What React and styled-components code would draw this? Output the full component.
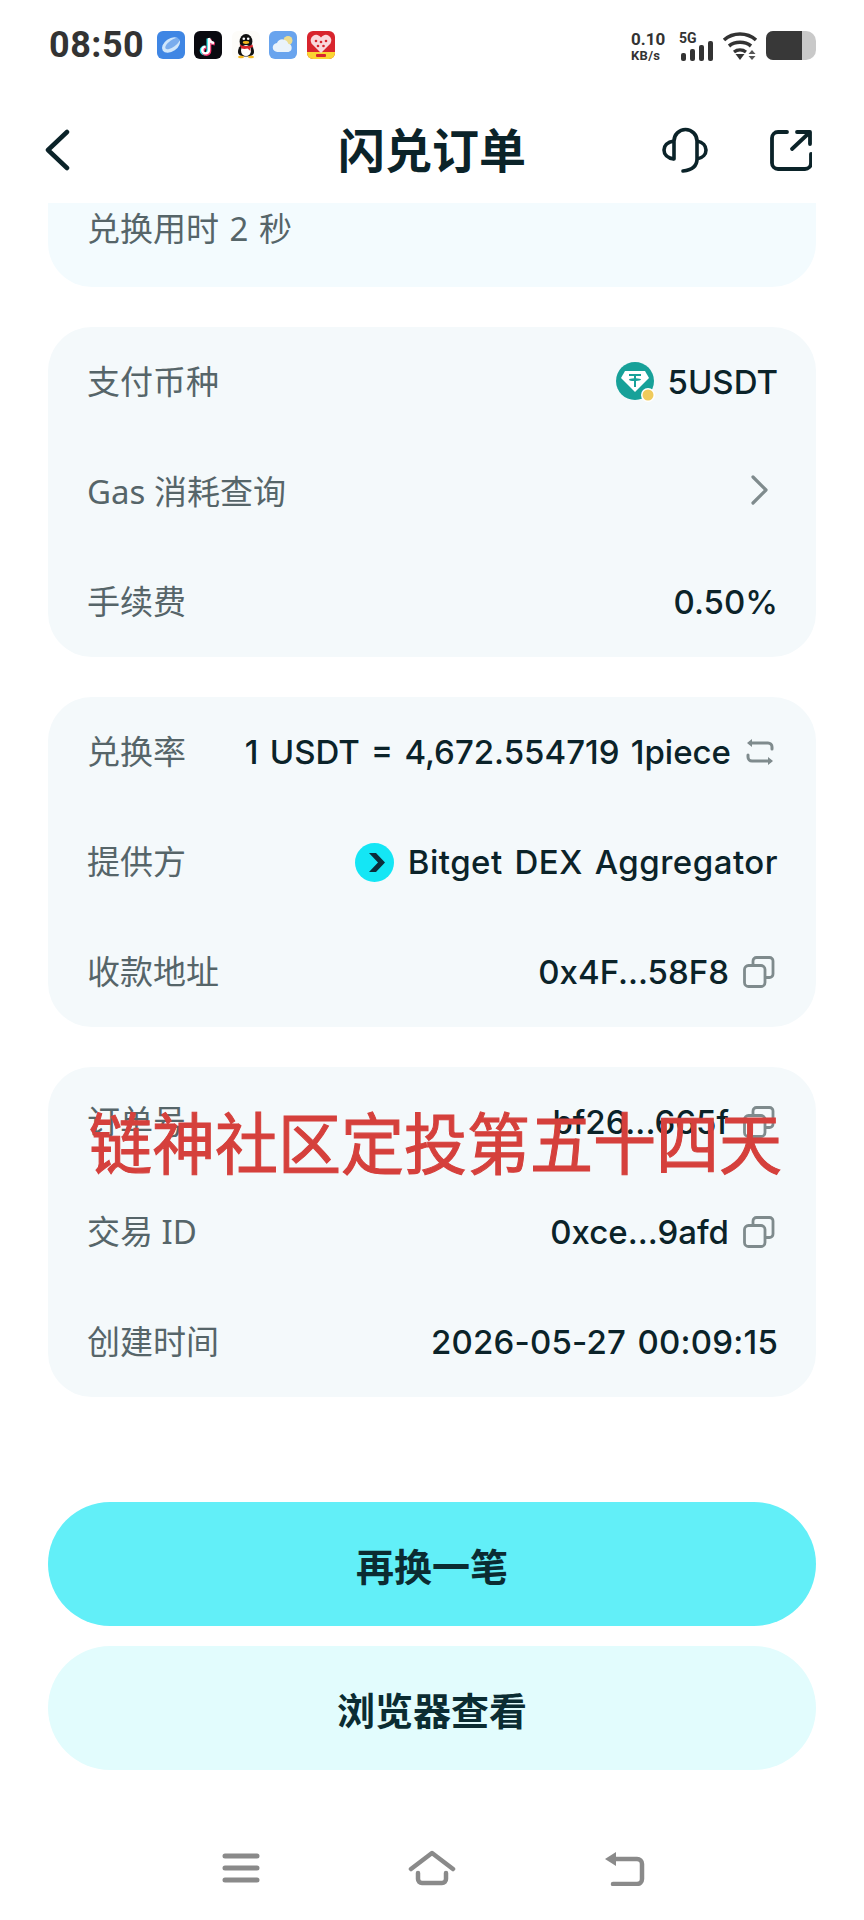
import React from 'react';
import styled, { createGlobalStyle } from 'styled-components';

const GlobalStyle = createGlobalStyle`
  html, body {
    margin: 0;
    padding: 0;
    background: #fff;
  }
  * {
    box-sizing: border-box;
  }
`;

const FONT = '"Noto Sans", "Noto Sans CJK SC", sans-serif';
const INK = '#0b2329';
const MUTED = '#566569';
const ICON_GRAY = '#7f8b8d';

const Page = styled.div`
  position: relative;
  width: 864px;
  height: 1920px;
  overflow: hidden;
  display: flex;
  flex-direction: column;
  background: #fff;
  font-family: ${FONT};
  color: ${INK};
`;

const StatusBar = styled.div`
  height: 90px;
  padding: 31px 48px 0 49px;
  display: flex;
  justify-content: space-between;
  align-items: flex-start;
  color: #333;
`;

const StatusLeft = styled.div`
  display: flex;
  align-items: center;
  gap: 9.5px;
`;

const Clock = styled.span`
  font-family: "Roboto", sans-serif;
  font-size: 36px;
  line-height: 28px;
  font-weight: 700;
  letter-spacing: 0.5px;
  margin-right: 3px;
`;

const StatusRight = styled.div`
  display: flex;
  align-items: flex-start;
`;

const Speed = styled.div`
  width: 48px;
  font-family: "Roboto", sans-serif;
  font-weight: 700;
  text-align: left;
  line-height: 1;
`;

const SpeedValue = styled.div`
  font-size: 17px;
  height: 18px;
`;

const SpeedUnit = styled.div`
  font-size: 13px;
  letter-spacing: 0.3px;
`;

const NetworkBox = styled.div`
  position: relative;
  width: 43px;
  height: 30px;
`;

const NetworkLabel = styled.span`
  position: absolute;
  left: 0;
  top: 0;
  font-family: "Roboto", sans-serif;
  font-size: 14px;
  line-height: 14px;
  font-weight: 700;
`;

const Battery = styled.div`
  width: 50px;
  height: 29px;
  margin-left: 8px;
  border-radius: 7px 10px 10px 7px;
  overflow: hidden;
  background: #c9c9c9;
`;

const BatteryFill = styled.div`
  height: 100%;
  background: #383838;
`;

const Header = styled.div`
  height: 113px;
  padding: 6px 52px 0;
  display: grid;
  grid-template-columns: 1fr auto 1fr;
  align-items: center;
  flex-shrink: 0;
`;

const BackButton = styled.div`
  display: flex;
  margin-left: -8px;
`;

const Title = styled.h1`
  margin: 0;
  font-size: 47px;
  line-height: 60px;
  font-weight: 700;
`;

const HeaderActions = styled.div`
  display: flex;
  align-items: center;
  justify-content: flex-end;
  gap: 62px;
`;

const Content = styled.div`
  padding: 0 48px;
  display: flex;
  flex-direction: column;
  gap: 40px;
`;

const DurationCard = styled.div`
  height: 84px;
  padding: 0 39px 36px;
  display: flex;
  align-items: center;
  background: #f3fbfe;
  border-radius: 0 0 44px 44px;
  font-size: 33px;
  word-spacing: 2px;
  color: ${MUTED};
`;

const Card = styled.div`
  background: #f4f9fb;
  border-radius: 44px;
  padding: 0 38px 0 39px;
`;

const Row = styled.div`
  height: 110px;
  padding-bottom: 4px;
  display: flex;
  align-items: center;
  justify-content: space-between;
`;

const Label = styled.span`
  font-size: 33px;
  color: ${MUTED};
  white-space: nowrap;
`;

const Value = styled.span`
  display: flex;
  align-items: center;
  gap: ${({ $gap }) => $gap || 14}px;
  padding-top: 4px;
  font-family: "Inter", "Noto Sans CJK SC", sans-serif;
  font-size: 33px;
  font-weight: 500;
  letter-spacing: ${({ $spacing }) => $spacing || 0}px;
  word-spacing: 2.5px;
  white-space: nowrap;
`;

const TrailingIcon = styled.span`
  display: flex;
  margin-right: ${({ $offset }) => $offset || 3}px;
`;

const Actions = styled.div`
  margin-top: 105px;
  padding: 0 48px;
  display: flex;
  flex-direction: column;
  gap: 20px;
`;

const Button = styled.div`
  height: 124px;
  border-radius: 62px;
  display: flex;
  align-items: center;
  justify-content: center;
  font-size: 38px;
  font-weight: 700;
  color: #0b2c32;
  background: ${({ $primary }) => ($primary ? '#62eff8' : '#e2fcfd')};
`;

const NavBar = styled.div`
  margin-top: 80px;
  padding: 0 219px 0 222px;
  display: flex;
  align-items: center;
  justify-content: space-between;
`;

const Watermark = styled.div`
  position: absolute;
  left: 89px;
  top: 1102px;
  font-family: "Noto Sans CJK SC", sans-serif;
  font-size: 63px;
  line-height: 76px;
  color: #d5403c;
  -webkit-text-stroke: 1px #d5403c;
  white-space: nowrap;
  transform: scaleY(1.06);
`;

const AppIcon = ({ children }) => (
  <svg width="28" height="28" viewBox="0 0 28 28">{children}</svg>
);

const BrowserIcon = () => (
  <AppIcon>
    <rect width="28" height="28" rx="6" fill="#3f86e4" />
    <ellipse cx="14" cy="14" rx="10" ry="6.5" fill="#cfe6fb" transform="rotate(-35 14 14)" />
    <ellipse cx="15.5" cy="12.5" rx="8.5" ry="3.5" fill="#3f86e4" transform="rotate(-35 15.5 12.5)" opacity="0.6" />
  </AppIcon>
);

const TikTokIcon = () => (
  <AppIcon>
    <rect width="28" height="28" rx="6" fill="#0a0a10" />
    <path d="M15 7v12a3.4 3.4 0 1 1-3.4-3.4M15 7c.4 3 2.4 4.6 5 5" fill="none" stroke="#25e2e6" strokeWidth="3" transform="translate(-1 .5)" />
    <path d="M15 7v12a3.4 3.4 0 1 1-3.4-3.4M15 7c.4 3 2.4 4.6 5 5" fill="none" stroke="#f2356b" strokeWidth="3" transform="translate(.8 1)" />
    <path d="M15 7v12a3.4 3.4 0 1 1-3.4-3.4M15 7c.4 3 2.4 4.6 5 5" fill="none" stroke="#fff" strokeWidth="2.4" />
  </AppIcon>
);

const QQIcon = () => (
  <AppIcon>
    <rect width="28" height="28" rx="6" fill="#fdfcf9" />
    <ellipse cx="14" cy="10.5" rx="6.4" ry="7.5" fill="#111" />
    <path d="M6 21c0-5 3-8 8-8s8 3 8 8c0 3-3 4.5-8 4.5S6 24 6 21z" fill="#111" />
    <ellipse cx="14" cy="19.5" rx="5" ry="5.5" fill="#fff" />
    <path d="M7.5 13.5c4 2 9 2 13 0l.5 2.5-3 1 .5 3-3-2.5c-2 .5-4 .5-6 0z" fill="#d8262b" />
    <ellipse cx="14" cy="11.5" rx="3.2" ry="1.4" fill="#f5b81f" />
    <circle cx="11.8" cy="7.8" r="1.3" fill="#fff" />
    <circle cx="16.2" cy="7.8" r="1.3" fill="#fff" />
    <ellipse cx="9" cy="26" rx="3" ry="1.2" fill="#f5b81f" />
    <ellipse cx="19" cy="26" rx="3" ry="1.2" fill="#f5b81f" />
  </AppIcon>
);

const WeatherIcon = () => (
  <AppIcon>
    <rect width="28" height="28" rx="6" fill="#69a4ee" />
    <circle cx="19" cy="9.5" r="4.5" fill="#ecdc8f" />
    <path d="M8.5 21a4.5 4.5 0 0 1-.5-9 6 6 0 0 1 11.3.8A4.2 4.2 0 0 1 19.5 21z" fill="#eaf3fb" />
  </AppIcon>
);

const ShopIcon = () => (
  <AppIcon>
    <rect width="28" height="28" rx="6" fill="#d8242d" />
    <path d="M0 21h28v1a6 6 0 0 1-6 6H6a6 6 0 0 1-6-6z" fill="#fbd532" />
    <path d="M14 22 4.5 12.5A5.3 5.3 0 0 1 14 6.5a5.3 5.3 0 0 1 9.5 6z" fill="#f9d8dc" />
    <g fill="#d8242d">
      <circle cx="9" cy="10" r="1.3" />
      <circle cx="14" cy="11" r="1.3" />
      <circle cx="19" cy="10" r="1.3" />
      <circle cx="11" cy="15" r="1.3" />
      <circle cx="16.5" cy="15" r="1.3" />
    </g>
    <rect x="9" y="23" width="10" height="3" rx="1" fill="#d8242d" />
  </AppIcon>
);

const SignalIcon = () => (
  <svg width="32" height="20" viewBox="0 0 32 20" style={{ position: 'absolute', left: 2, top: 10 }}>
    <rect x="0" y="12" width="5" height="8" rx="2" fill="#333" />
    <rect x="9" y="8" width="5" height="12" rx="2" fill="#333" />
    <rect x="18" y="4" width="5" height="16" rx="2" fill="#333" />
    <rect x="27" y="0" width="5" height="20" rx="2" fill="#333" />
  </svg>
);

const WifiIcon = () => (
  <svg width="36" height="30" viewBox="0 0 36 30">
    <path d="M2 9c9-8 23-8 32 0" fill="none" stroke="#333" strokeWidth="3.6" />
    <path d="M7 15c6-5 16-5 22 0" fill="none" stroke="#333" strokeWidth="3.6" />
    <path d="M12 21c3.5-2.6 8.5-2.6 12 0" fill="none" stroke="#333" strokeWidth="3.4" />
    <path d="M13.5 23h9l-4.5 6z" fill="#333" />
    <path d="M30 19l3.5 4h-7zM30 29l3.5-4h-7z" fill="#555" />
  </svg>
);

const BackIcon = () => (
  <svg width="26" height="42" viewBox="0 0 26 42">
    <path d="M23 3 4 21l19 18" fill="none" stroke={INK} strokeWidth="4.5" strokeLinecap="round" strokeLinejoin="round" />
  </svg>
);

const HeadsetIcon = () => (
  <svg width="46" height="46" viewBox="0 0 46 46">
    <path d="M12 32V14a11.5 11.5 0 0 1 23 0v18c0 7-5 11-14 12" fill="none" stroke={INK} strokeWidth="3.6" strokeLinecap="round" />
    <path d="M12 14C5 15 2 19 2 23s3 8 10 9M35 14c6 1 9 5 9 9s-3 8-9 9" fill="none" stroke={INK} strokeWidth="3.6" strokeLinejoin="round" />
  </svg>
);

const ShareIcon = () => (
  <svg width="42" height="42" viewBox="0 0 42 42">
    <path d="M17 3H8a6 6 0 0 0-6 6v25a6 6 0 0 0 6 6h27a6 6 0 0 0 6-6v-9" fill="none" stroke={INK} strokeWidth="3.8" strokeLinecap="round" />
    <path d="M22 20 39 4M27 3h13v12" fill="none" stroke={INK} strokeWidth="3.8" strokeLinecap="round" strokeLinejoin="round" />
  </svg>
);

const TetherIcon = () => (
  <svg width="40" height="40" viewBox="0 0 40 40">
    <circle cx="19" cy="19" r="19" fill="#17a199" />
    <path d="M9 9h20l4 7-14 14L5 16z" fill="#fff" />
    <path d="M13 12h12v2h-5v2.2c2.6.1 5 .6 5 1.4s-2.4 1.3-5 1.4V25h-2v-5.9c-2.6-.1-5-.6-5-1.4s2.4-1.3 5-1.4V14h-5z" fill="#17a199" />
    <circle cx="32" cy="33" r="7" fill="#fff" />
    <circle cx="32" cy="33" r="5.5" fill="#efcb5c" />
  </svg>
);

const BitgetIcon = () => (
  <svg width="39" height="39" viewBox="0 0 39 39">
    <circle cx="19.5" cy="19.5" r="19.5" fill="#14e6f5" />
    <path d="M14 10h7l9 9.5-9 9.5h-7l9-9.5z" fill="#0b2d3b" />
  </svg>
);

const ChevronIcon = () => (
  <svg width="18" height="30" viewBox="0 0 18 30">
    <path d="M2 2l13 13L2 28" fill="none" stroke={ICON_GRAY} strokeWidth="3.2" strokeLinecap="round" strokeLinejoin="round" />
  </svg>
);

const SwapIcon = () => (
  <svg width="30" height="28" viewBox="0 0 30 28">
    <path d="M7 1 2 5l5 4zM23 27l5-4-5-4z" fill={ICON_GRAY} />
    <path d="M5 5h18a4 4 0 0 1 4 4v2M25 23H7a4 4 0 0 1-4-4v-2" fill="none" stroke={ICON_GRAY} strokeWidth="3" strokeLinecap="round" />
  </svg>
);

const CopyIcon = () => (
  <svg width="32" height="32" viewBox="0 0 32 32">
    <rect x="1.5" y="9.5" width="20.5" height="21" rx="4" fill="none" stroke={ICON_GRAY} strokeWidth="2.8" />
    <path d="M10 9V5a3.5 3.5 0 0 1 3.5-3.5h13A3.5 3.5 0 0 1 30 5v13a3.5 3.5 0 0 1-3.5 3.5H22" fill="none" stroke={ICON_GRAY} strokeWidth="2.8" />
  </svg>
);

const MenuIcon = () => (
  <svg width="38" height="30" viewBox="0 0 38 30">
    <path d="M3 3h32M3 15h32M3 27h32" stroke="#8a8a8a" strokeWidth="5" strokeLinecap="round" />
  </svg>
);

const HomeIcon = () => (
  <svg width="48" height="36" viewBox="0 0 48 36">
    <path d="M3 19 24 3l21 16" fill="none" stroke="#8a8a8a" strokeWidth="4.5" strokeLinecap="round" strokeLinejoin="round" />
    <path d="M10 23v6a4 4 0 0 0 4 4h20a4 4 0 0 0 4-4v-6" fill="none" stroke="#8a8a8a" strokeWidth="4.5" strokeLinecap="round" />
  </svg>
);

const ReturnIcon = () => (
  <svg width="42" height="36" viewBox="0 0 42 36">
    <path d="M2 9 13 2v14z" fill="#8a8a8a" />
    <path d="M8 9h26a5 5 0 0 1 5 5v15a5 5 0 0 1-5 5H10" fill="none" stroke="#8a8a8a" strokeWidth="4.5" strokeLinecap="round" />
  </svg>
);

const App = () => (
  <Page>
    <GlobalStyle />
    <StatusBar>
      <StatusLeft>
        <Clock>08:50</Clock>
        <BrowserIcon />
        <TikTokIcon />
        <QQIcon />
        <WeatherIcon />
        <ShopIcon />
      </StatusLeft>
      <StatusRight>
        <Speed>
          <SpeedValue>0.10</SpeedValue>
          <SpeedUnit>KB/s</SpeedUnit>
        </Speed>
        <NetworkBox>
          <NetworkLabel>5G</NetworkLabel>
          <SignalIcon />
        </NetworkBox>
        <WifiIcon />
        <Battery>
          <BatteryFill style={{ width: '72%' }} />
        </Battery>
      </StatusRight>
    </StatusBar>

    <Header>
      <BackButton>
        <BackIcon />
      </BackButton>
      <Title>闪兑订单</Title>
      <HeaderActions>
        <HeadsetIcon />
        <ShareIcon />
      </HeaderActions>
    </Header>

    <Content>
      <DurationCard>兑换用时 2 秒</DurationCard>

      <Card>
        <Row>
          <Label>支付币种</Label>
          <Value $gap={11}>
            <TetherIcon />
            5USDT
          </Value>
        </Row>
        <Row>
          <Label>Gas 消耗查询</Label>
          <TrailingIcon $offset={9}>
            <ChevronIcon />
          </TrailingIcon>
        </Row>
        <Row>
          <Label>手续费</Label>
          <Value>0.50%</Value>
        </Row>
      </Card>

      <Card>
        <Row>
          <Label>兑换率</Label>
          <Value>
            1 USDT = 4,672.554719 1piece
            <TrailingIcon>
              <SwapIcon />
            </TrailingIcon>
          </Value>
        </Row>
        <Row>
          <Label>提供方</Label>
          <Value $spacing={0.5}>
            <BitgetIcon />
            Bitget DEX Aggregator
          </Value>
        </Row>
        <Row>
          <Label>收款地址</Label>
          <Value>
            0x4F...58F8
            <TrailingIcon>
              <CopyIcon />
            </TrailingIcon>
          </Value>
        </Row>
      </Card>

      <Card>
        <Row>
          <Label>订单号</Label>
          <Value>
            bf26...665f
            <TrailingIcon>
              <CopyIcon />
            </TrailingIcon>
          </Value>
        </Row>
        <Row>
          <Label>交易 ID</Label>
          <Value>
            0xce...9afd
            <TrailingIcon>
              <CopyIcon />
            </TrailingIcon>
          </Value>
        </Row>
        <Row>
          <Label>创建时间</Label>
          <Value $spacing={0.2}>2026-05-27 00:09:15</Value>
        </Row>
      </Card>
    </Content>

    <Actions>
      <Button $primary>再换一笔</Button>
      <Button>浏览器查看</Button>
    </Actions>

    <NavBar>
      <MenuIcon />
      <HomeIcon />
      <ReturnIcon />
    </NavBar>

    <Watermark>链神社区定投第五十四天</Watermark>
  </Page>
);

export default App;
